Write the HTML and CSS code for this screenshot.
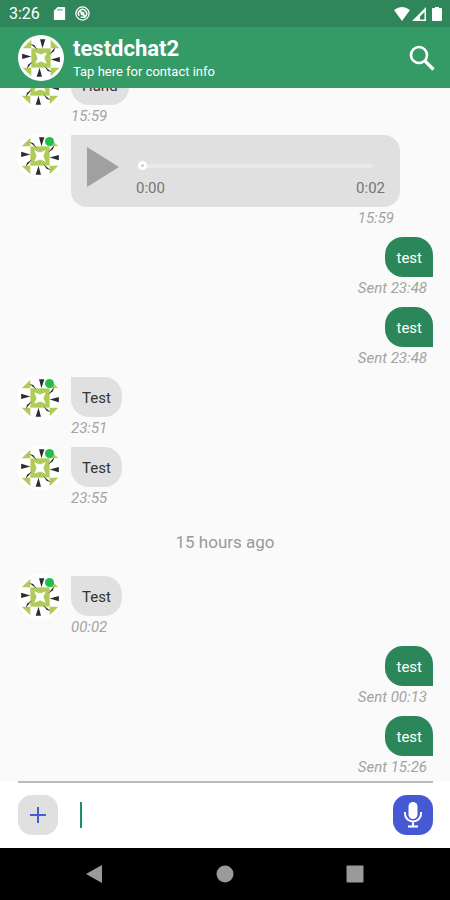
FILE: index.html
```html
<!DOCTYPE html>
<html lang="en">
<head>
<meta charset="utf-8">
<meta name="viewport" content="width=device-width, initial-scale=1">
<title>testdchat2</title>
<link rel="stylesheet" href="styles.css">
</head>
<body>
<svg class="defs" aria-hidden="true">
  <defs>
    <g id="side">
      <path fill="#b0cc58" d="M1 10 10 1V10Z"/>
      <path fill="#2b2b33" d="M19 0.500 24.500 0.500 21.500 10Z M9 5.500 13 6.500 16.500 11.500Z"/>
    </g>
    <symbol id="identicon" viewBox="0 0 40 40">
      <circle cx="20" cy="20" r="20" fill="#fff"/>
      <g transform="translate(3.200 3.200) scale(0.840)">
        <path fill="#b0cc58" d="M10 10H30V30H10Z"/>
        <use href="#side"/>
        <use href="#side" transform="rotate(90 20 20)"/>
        <use href="#side" transform="rotate(180 20 20)"/>
        <use href="#side" transform="rotate(270 20 20)"/>
        <path fill="#fff" d="M14 14 20 16.500 26 14 23.500 20 26 26 20 23.500 14 26 16.500 20Z"/>
      </g>
    </symbol>
  </defs>
</svg>
<div class="app">
  <div class="status">
    <span class="clock">3:26</span>
    <svg class="status-icon" viewBox="0 0 16 16"><path fill="#fff" d="M6 1H13Q14 1 14 2V14Q14 15 13 15H3Q2 15 2 14V5Z"/><path stroke="#2e865a" d="M6.500 3V5M8.500 3V5M10.500 3V5"/></svg>
    <svg class="status-icon" viewBox="0 0 16 16" fill="none" stroke="#fff"><circle cx="8" cy="8" r="7" stroke-width="1.400"/><path stroke-width="1.600" d="M4.500 10.500A4.300 4.300 0 1 1 11 11.200M5 5 11.500 12M6 12H11"/><circle cx="8" cy="8" r="1.600" stroke-width="1.200"/></svg>
    <span class="spacer"></span>
    <svg class="signals" viewBox="0 0 50 16"><path fill="#fff" d="M1 4Q9 -2 17 4L9 15Z"/><path fill="#fff" fill-rule="evenodd" d="M19 15 33 1V15ZM27 13.500H31.500V6L27 10.500Z"/><path fill="#fff" d="M42 1H46V2H48Q49 2 49 3V14Q49 15 48 15H40Q39 15 39 14V3Q39 2 40 2H42Z"/></svg>
  </div>
  <header class="header">
    <svg class="identicon"><use href="#identicon"/></svg>
    <div class="contact">
      <h1>testdchat2</h1>
      <p>Tap here for contact info</p>
    </div>
    <button class="search" aria-label="Search"><svg viewBox="0 0 26 26" fill="none" stroke="#fff"><circle cx="10" cy="10" r="8" stroke-width="2.600"/><path stroke-width="3.200" d="M15.500 15.500 24.500 24.500"/></svg></button>
  </header>
  <main class="feed">
    <div class="message">
      <div class="avatar"><svg class="identicon"><use href="#identicon"/></svg><i></i></div>
      <div class="body"><p class="bubble">Hand</p><time>15:59</time></div>
    </div>
    <div class="message">
      <div class="avatar"><svg class="identicon"><use href="#identicon"/></svg><i></i></div>
      <div class="body voice">
        <div class="player">
          <button class="play" aria-label="Play"><svg viewBox="0 0 32 40"><path fill="#a0a0a0" d="M0 0 32 20 0 40Z"/></svg></button>
          <div class="progress">
            <input type="range" min="0" max="2" value="0" aria-label="Position">
            <div class="durations"><span>0:00</span><span>0:02</span></div>
          </div>
        </div>
        <time>15:59</time>
      </div>
    </div>
    <div class="message sent"><div class="body"><p class="bubble">test</p><time>Sent 23:48</time></div></div>
    <div class="message sent"><div class="body"><p class="bubble">test</p><time>Sent 23:48</time></div></div>
    <div class="message">
      <div class="avatar"><svg class="identicon"><use href="#identicon"/></svg><i></i></div>
      <div class="body"><p class="bubble">Test</p><time>23:51</time></div>
    </div>
    <div class="message">
      <div class="avatar"><svg class="identicon"><use href="#identicon"/></svg><i></i></div>
      <div class="body"><p class="bubble">Test</p><time>23:55</time></div>
    </div>
    <p class="divider">15 hours ago</p>
    <div class="message">
      <div class="avatar"><svg class="identicon"><use href="#identicon"/></svg><i></i></div>
      <div class="body"><p class="bubble">Test</p><time>00:02</time></div>
    </div>
    <div class="message sent"><div class="body"><p class="bubble">test</p><time>Sent 00:13</time></div></div>
    <div class="message sent"><div class="body"><p class="bubble">test</p><time>Sent 15:26</time></div></div>
  </main>
  <form class="composer">
    <div class="composer-row">
      <button type="button" class="round add" aria-label="Attach"><svg viewBox="0 0 16 16" stroke="#4a5bd0" stroke-width="2"><path d="M8 0V16M0 8H16"/></svg></button>
      <label class="field"><span class="caret"></span><input type="text" aria-label="Message"></label>
      <button type="button" class="round mic" aria-label="Record"><svg viewBox="0 0 20 26"><rect x="5.500" y="0" width="9" height="17" rx="4.500" fill="#fff"/><path fill="none" stroke="#fff" stroke-width="2" d="M2 10V12A8 7.500 0 0 0 18 12V10M10 19.500V24M5 24.500H15"/></svg></button>
    </div>
  </form>
  <nav class="nav">
    <button aria-label="Back"><svg viewBox="0 0 18 18"><path fill="#9a9a9a" d="M0 9 16 0V18Z"/></svg></button>
    <button aria-label="Home"><svg viewBox="0 0 18 18"><circle cx="9" cy="9" r="8.500" fill="#9a9a9a"/></svg></button>
    <button aria-label="Recents"><svg viewBox="0 0 18 18"><rect x="0.500" y="0.500" width="17" height="17" rx="1" fill="#9a9a9a"/></svg></button>
  </nav>
</div>
</body>
</html>
```
FILE: styles.css
```css
* { box-sizing: border-box; }
body {
  margin: 0;
  font-family: Roboto, "Liberation Sans", sans-serif;
  font-size: 15px;
}
h1, p { margin: 0; }
button {
  padding: 0;
  border: 0;
  background: none;
  display: flex;
  align-items: center;
  justify-content: center;
}
svg { display: block; flex: none; }
.defs { position: absolute; width: 0; height: 0; }
.app {
  height: 100vh;
  display: flex;
  flex-direction: column;
  background: #fafafa;
}

.status {
  flex: none;
  height: 27px;
  padding: 0 7px 0 9px;
  display: flex;
  align-items: center;
  gap: 8px;
  background: #2e865a;
  color: #fff;
}
.clock { margin-right: 4px; font-size: 16px; }
.status-icon { width: 15px; height: 15px; }
.spacer { flex: 1; }
.signals { width: 50px; height: 16px; }

.header {
  flex: none;
  height: 61px;
  padding: 0 15px 0 18px;
  display: flex;
  align-items: center;
  gap: 9px;
  background: #349a66;
  color: #fff;
}
.identicon { width: 46px; height: 46px; }
.contact { flex: 1; padding-top: 3px; }
.contact h1 { font-size: 22px; line-height: 26px; font-weight: 700; }
.contact p { font-size: 13px; line-height: 20px; }
.search svg { width: 26px; height: 26px; }

.feed {
  flex: 1;
  min-height: 0;
  overflow: hidden;
  padding: 0 17px 3px 17px;
  display: flex;
  flex-direction: column;
  justify-content: flex-end;
  gap: 8px;
}
.message {
  flex: none;
  display: flex;
  align-items: flex-start;
  gap: 8px;
}
.avatar {
  position: relative;
  margin-top: -2px;
}
.avatar i {
  position: absolute;
  top: 4px;
  right: 9px;
  width: 9px;
  height: 9px;
  border-radius: 50%;
  background: #1fbf4c;
}
.body {
  display: flex;
  flex-direction: column;
  align-items: flex-start;
}
.bubble {
  padding: 2px 11px 0;
  line-height: 38px;
  border-radius: 0 18px 18px 18px;
  background: #e0e0e0;
  color: #333;
}
time {
  line-height: 22px;
  font-style: italic;
  color: #a3a3a3;
}
.sent { justify-content: flex-end; }
.sent .body { align-items: flex-end; }
.sent .bubble {
  border-radius: 18px 18px 0 18px;
  background: #2b8759;
  color: #fff;
}
.sent time, .voice time { padding-right: 6px; }

.voice {
  flex: 1;
  align-items: stretch;
  margin-right: 33px;
}
.voice time { text-align: right; }
.player {
  height: 72px;
  padding: 0 15px 0 16px;
  display: flex;
  gap: 17px;
  border-radius: 0 16px 16px 16px;
  background: #e0e0e0;
}
.play { height: 64px; }
.play svg { width: 32px; height: 40px; }
.progress { flex: 1; padding-top: 24px; }
.progress input {
  appearance: none;
  display: block;
  width: calc(100% - 14px);
  height: 14px;
  margin: 0 12px 0 2px;
  background: none;
}
.progress input::-webkit-slider-runnable-track {
  height: 4px;
  border-radius: 2px;
  background: #e9e9e9;
}
.progress input::-webkit-slider-thumb {
  appearance: none;
  width: 9px;
  height: 9px;
  margin-top: -3px;
  border: 3px solid #fff;
  border-radius: 50%;
  background: #ccc;
}
.durations {
  display: flex;
  justify-content: space-between;
  line-height: 30px;
  color: #757575;
}
.divider {
  flex: none;
  text-align: center;
  font-size: 17px;
  line-height: 51px;
  color: #999;
}

.composer {
  flex: none;
  background: #fff;
  padding: 0 17px 0 18px;
}
.composer-row {
  border-top: 2px solid #bbb;
  height: 67px;
  padding-bottom: 1px;
  display: flex;
  align-items: center;
  gap: 22px;
}
.round {
  width: 40px;
  height: 40px;
  border-radius: 14px;
}
.add { background: #e0e0e0; }
.add svg { width: 16px; height: 16px; }
.mic { background: #4659d4; }
.mic svg { width: 20px; height: 26px; }
.field { flex: 1; display: flex; align-items: center; }
.caret { width: 2px; height: 26px; background: #1b9066; }
.field input {
  flex: 1;
  min-width: 0;
  height: 40px;
  padding: 0;
  border: 0;
  outline: 0;
  background: none;
  font: inherit;
}

.nav {
  flex: none;
  height: 52px;
  display: flex;
  justify-content: center;
  background: #000;
}
.nav button { flex: 0 1 130px; }
.nav svg { width: 18px; height: 18px; }
```
